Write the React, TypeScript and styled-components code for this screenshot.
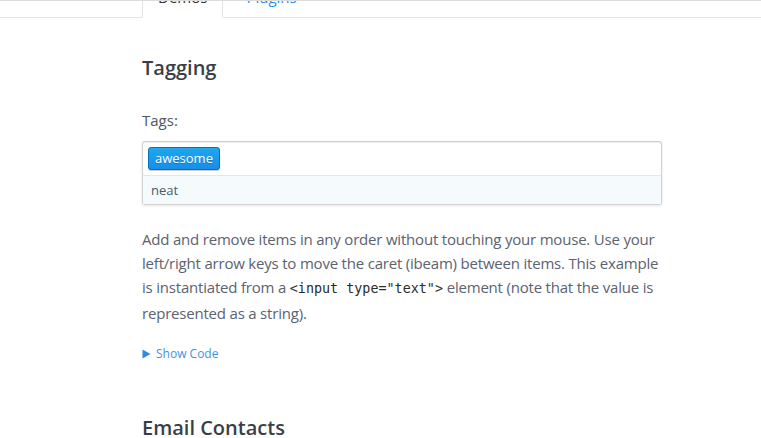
import React from "react";
import styled, { createGlobalStyle, css } from "styled-components";

const GlobalStyle = createGlobalStyle`
  html, body {
    margin: 0;
    padding: 0;
    background: #ffffff;
    overflow: hidden;
  }
  body {
    font-family: "Open Sans", "Noto Sans", sans-serif;
    color: #5b6270;
    -webkit-font-smoothing: antialiased;
  }
  * { box-sizing: border-box; }
`;

const TopEdge = styled.div`
  position: fixed;
  top: 0;
  left: 0;
  right: 0;
  height: 1px;
  background: #dcdcdf;
  z-index: 5;
`;

const TabBar = styled.nav`
  display: flex;
  gap: 1px;
  margin-top: -24px;
  padding-left: 142px;
  border-bottom: 1px solid #e4e4e4;
`;

const Tab = styled.a<{ $active?: boolean }>`
  display: block;
  padding: 10px 15px 10px;
  line-height: 20px;
  font-size: 15px;
  border: 1px solid transparent;
  margin-bottom: -1px;
  text-decoration: none;
  ${(p) =>
    p.$active
      ? css`
          color: #303030;
          background: #ffffff;
          border-color: #e4e4e4;
          border-bottom-color: #ffffff;
        `
      : css`
          color: #2a8de6;
          padding-left: 21px;
        `}
`;

const Main = styled.main`
  margin-left: 142px;
  width: 520px;
`;

const Heading = styled.h2<{ $gap: number }>`
  margin: ${(p) => p.$gap}px 0 0;
  font-size: 20px;
  line-height: 25px;
  font-weight: 600;
  color: #3a3f47;
`;

const Label = styled.div`
  margin-top: 30px;
  font-size: 15px;
  line-height: 20px;
  color: #4f5561;
`;

const Control = styled.div`
  margin-top: 11px;
  border-radius: 3px;
  box-shadow: 0 1px 3px rgba(0, 0, 0, 0.1);
`;

const InputArea = styled.div`
  display: flex;
  flex-wrap: wrap;
  padding: 5px 5px 2px;
  border: 1px solid #d0d0d0;
  border-bottom: none;
  border-radius: 3px 3px 0 0;
  background: #ffffff;
  box-shadow: inset 0 1px 1px rgba(0, 0, 0, 0.08);
`;

const TagItem = styled.span`
  display: inline-block;
  margin: 0 3px 3px 0;
  padding: 2px 6px;
  line-height: 17px;
  font-size: 13px;
  color: #ffffff;
  border: 1px solid #0073bb;
  border-radius: 3px;
  background-color: #1b9dec;
  background-image: linear-gradient(to bottom, #1da7ee, #178ee9);
  text-shadow: 0 1px 0 rgba(0, 51, 83, 0.3);
  box-shadow: 0 1px 0 rgba(0, 0, 0, 0.2), inset 0 1px rgba(255, 255, 255, 0.03);
`;

const Dropdown = styled.div`
  border: 1px solid #d0d0d0;
  border-top-color: #e6e6e6;
  border-radius: 0 0 3px 3px;
  background: #ffffff;
`;

const Option = styled.div<{ $active?: boolean }>`
  padding: 5px 8px;
  line-height: 18px;
  font-size: 13px;
  color: #495c68;
  background: ${(p) => (p.$active ? "#f5fafd" : "#ffffff")};
`;

const Paragraph = styled.p`
  margin: 22px 0 0;
  font-size: 15px;
  line-height: 24px;
  letter-spacing: -0.2px;
  color: #5b6270;
`;

const Code = styled.code`
  font-family: "DejaVu Sans Mono", "Liberation Mono", monospace;
  font-size: 13.4px;
  letter-spacing: 0;
  color: #2b2b2b;
`;

const ShowCode = styled.a`
  display: flex;
  align-items: center;
  gap: 5px;
  margin-top: 20px;
  font-size: 12px;
  line-height: 18px;
  color: #3f93e4;
  text-decoration: none;
`;

const Arrow = () => (
  <svg width="9" height="10" viewBox="0 0 9 10" aria-hidden="true">
    <path d="M0.5 0.5 L8.5 5 L0.5 9.5 Z" fill="#2f8ae3" />
  </svg>
);

export default function App() {
  return (
    <>
      <GlobalStyle />
      <TopEdge />
      <TabBar>
        <Tab $active>Demos</Tab>
        <Tab>Plugins</Tab>
      </TabBar>
      <Main>
        <Heading $gap={37}>Tagging</Heading>
        <Label>Tags:</Label>
        <Control>
          <InputArea>
            <TagItem>awesome</TagItem>
          </InputArea>
          <Dropdown>
            <Option $active>neat</Option>
          </Dropdown>
        </Control>
        <Paragraph>
          Add and remove items in any order without touching your mouse. Use your
          left/right arrow keys to move the caret (ibeam) between items. This example
          is instantiated from a <Code>&lt;input type="text"&gt;</Code> element (note
          that the value is represented as a string).
        </Paragraph>
        <ShowCode>
          <Arrow />
          Show Code
        </ShowCode>
        <Heading $gap={52}>Email Contacts</Heading>
      </Main>
    </>
  );
}
